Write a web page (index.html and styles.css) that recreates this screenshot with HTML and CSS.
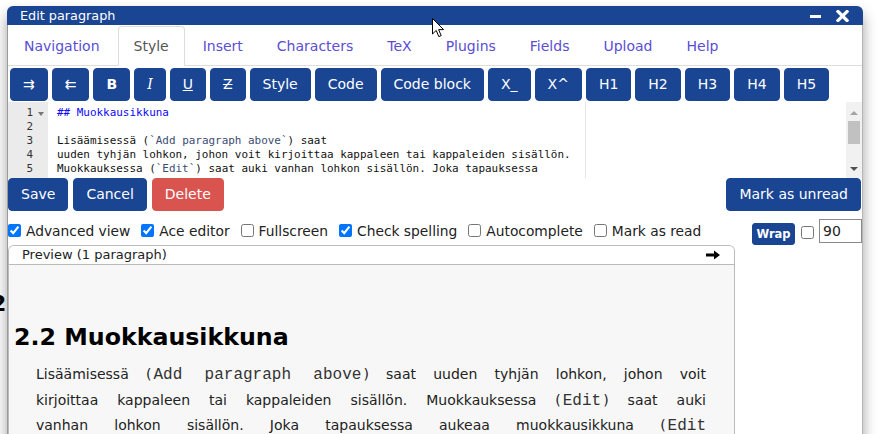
FILE: index.html
```html
<!DOCTYPE html>
<html lang="fi">
<head>
<meta charset="utf-8">
<title>Edit paragraph</title>
<link rel="stylesheet" href="styles.css">
</head>
<body>
<div class="backdrop"><div class="bg-heading">2</div></div>

<div class="dialog">
  <div class="titlebar">
    <span class="title">Edit paragraph</span>
    <div class="win-ctrls">
      <svg class="ico-min" width="11" height="3" viewBox="0 0 11 3"><rect width="11" height="3" fill="#fff"/></svg>
      <svg class="ico-close" width="13" height="12" viewBox="0 0 13 12"><path d="M2 1.5 L11 10.5 M11 1.5 L2 10.5" stroke="#fff" stroke-width="3.2" stroke-linecap="square"/></svg>
    </div>
  </div>
  <div class="dbody">
    <ul class="tabs">
      <li><a>Navigation</a></li>
      <li class="active"><a>Style</a></li>
      <li><a>Insert</a></li>
      <li><a>Characters</a></li>
      <li><a>TeX</a></li>
      <li><a>Plugins</a></li>
      <li><a>Fields</a></li>
      <li><a>Upload</a></li>
      <li><a>Help</a></li>
    </ul>
    <div class="toolbar">
      <button class="btn">⇉</button>
      <button class="btn">⇇</button>
      <button class="btn"><b>B</b></button>
      <button class="btn"><i>I</i></button>
      <button class="btn"><u>U</u></button>
      <button class="btn"><s>Z</s></button>
      <button class="btn">Style</button>
      <button class="btn">Code</button>
      <button class="btn">Code block</button>
      <button class="btn">X_</button>
      <button class="btn">X^</button>
      <button class="btn">H1</button>
      <button class="btn">H2</button>
      <button class="btn">H3</button>
      <button class="btn">H4</button>
      <button class="btn">H5</button>
    </div>
    <div class="editor">
      <div class="gutter">
        <div class="gl">1<span class="fold"></span></div>
        <div class="gl">2</div>
        <div class="gl">3</div>
        <div class="gl">4</div>
        <div class="gl">5</div>
      </div>
      <div class="code">
        <div class="cl"><span class="hd">## Muokkausikkuna</span></div>
        <div class="cl"> </div>
        <div class="cl">Lisäämisessä (<span class="cd">`Add paragraph above`</span>) saat</div>
        <div class="cl">uuden tyhjän lohkon, johon voit kirjoittaa kappaleen tai kappaleiden sisällön.</div>
        <div class="cl">Muokkauksessa (<span class="cd">`Edit`</span>) saat auki vanhan lohkon sisällön. Joka tapauksessa</div>
        <div class="print-margin"></div>
      </div>
      <div class="vscroll">
        <span class="arr-up"></span>
        <span class="thumb"></span>
        <span class="arr-down"></span>
      </div>
    </div>
    <div class="actions">
      <div class="act-left">
        <button class="btn">Save</button>
        <button class="btn">Cancel</button>
        <button class="btn btn-red">Delete</button>
      </div>
      <button class="btn">Mark as unread</button>
    </div>
    <div class="lower">
      <div class="left-col">
        <div class="checks">
          <label class="chk"><input type="checkbox" checked>Advanced view</label>
          <label class="chk"><input type="checkbox" checked>Ace editor</label>
          <label class="chk"><input type="checkbox">Fullscreen</label>
          <label class="chk"><input type="checkbox" checked>Check spelling</label>
          <label class="chk"><input type="checkbox">Autocomplete</label>
          <label class="chk"><input type="checkbox">Mark as read</label>
        </div>
        <div class="preview">
          <div class="pv-head">
            <span>Preview (1 paragraph)</span>
            <svg width="14" height="10" viewBox="0 0 14 10"><path d="M0 3.6 H8 V0.5 L14 5 L8 9.5 V6.4 H0 Z" fill="#000"/></svg>
          </div>
          <div class="pv-body">
            <h2 class="pv-h">2.2 Muokkausikkuna</h2>
            <p class="pv-p">Lisäämisessä (<code>Add paragraph above</code>) saat uuden tyhjän lohkon, johon voit<br>kirjoittaa kappaleen tai kappaleiden sisällön. Muokkauksessa (<code>Edit</code>) saat auki<br>vanhan lohkon sisällön. Joka tapauksessa aukeaa muokkausikkuna (<code>Edit<br>paragraph</code>), jossa kappaletta voi muokata.</p>
          </div>
        </div>
      </div>
      <div class="right-col">
        <button class="btn btn-wrap">Wrap</button>
        <input class="wrap-cb" type="checkbox">
        <input class="wrap-num" type="text" value="90">
      </div>
    </div>
  </div>
</div>

<svg class="cursor" width="13" height="20" viewBox="0 0 13 20"><path d="M0.5 0.5 V16 L4.2 12.4 L6.8 18.6 L9.2 17.6 L6.6 11.6 H11.6 Z" fill="#fff" stroke="#000" stroke-width="1"/></svg>
</body>
</html>
```

FILE: styles.css
```css
html, body {
  margin: 0;
  padding: 0;
  background: #fff;
  width: 878px;
  height: 434px;
  overflow: hidden;
  font-family: "DejaVu Sans", Verdana, sans-serif;
}

.backdrop {
  position: absolute;
  left: 0;
  top: 0;
  width: 878px;
  height: 434px;
}
.bg-heading {
  position: absolute;
  left: -9px;
  top: 291px;
  font-weight: bold;
  font-size: 22px;
  white-space: nowrap;
  color: #000;
}

.dialog {
  position: absolute;
  left: 7px;
  top: 6px;
  width: 856px;
  height: 440px;
  background: #fff;
  border-radius: 6px 6px 0 0;
  box-shadow: 0 8px 14px rgba(0, 0, 0, 0.38);
}

.titlebar {
  height: 19px;
  background: #1a4593;
  border-radius: 6px 6px 0 0;
  display: flex;
  align-items: center;
  justify-content: space-between;
  padding: 0 14px 0 13px;
  color: #fff;
}
.title {
  font-size: 12.8px;
  line-height: 19px;
}
.win-ctrls {
  display: flex;
  align-items: center;
  gap: 15px;
}
.ico-min { margin-top: 2px; }

.dbody {
  border-left: 1px solid #9a9a9a;
  border-right: 1px solid #b5b5b5;
  height: 430px;
}

.tabs {
  list-style: none;
  margin: 0;
  padding: 1px 0 0 0;
  display: flex;
  border-bottom: 1px solid #ddd;
}
.tabs li {
  margin-bottom: -1px;
  margin-right: 2px;
}
.tabs a {
  display: block;
  padding: 9px 15px;
  line-height: 20px;
  font-size: 14px;
  color: #5a4ed3;
  border: 1px solid transparent;
  border-radius: 4px 4px 0 0;
}
.tabs .active a {
  color: #555;
  background: #fff;
  border-color: #ddd #ddd transparent;
}

.btn {
  font-family: "DejaVu Sans", Verdana, sans-serif;
  font-size: 14px;
  height: 33px;
  padding: 0 12px;
  border: 1px solid #1a4593;
  background: #1a4593;
  color: #fff;
  border-radius: 4px;
  line-height: 31px;
  cursor: pointer;
}
.btn i { font-family: "DejaVu Serif", serif; }
.btn-red {
  background: #d9534f;
  border-color: #d9534f;
}

.toolbar {
  display: flex;
  gap: 4px;
  padding: 2px 0 1px 2px;
}

.editor {
  display: flex;
  height: 76px;
  overflow: hidden;
  background: #fff;
}
.gutter {
  width: 40px;
  flex-shrink: 0;
  background: #ebebeb;
  padding-top: 4px;
  font-family: "DejaVu Sans Mono", monospace;
  font-size: 10.95px;
  color: #333;
}
.gl {
  height: 14px;
  line-height: 14px;
  text-align: right;
  padding-right: 15px;
  position: relative;
}
.fold {
  position: absolute;
  right: 4px;
  top: 6px;
  width: 0;
  height: 0;
  border-left: 3px solid transparent;
  border-right: 3px solid transparent;
  border-top: 4px solid #777;
}
.code {
  flex: 1;
  position: relative;
  padding: 4px 0 0 9px;
  font-family: "DejaVu Sans Mono", monospace;
  font-size: 10.95px;
  color: #111;
}
.cl {
  height: 14px;
  line-height: 14px;
  white-space: pre;
}
.hd { color: #0c07ff; }
.cd { color: #3c4c72; }
.print-margin {
  position: absolute;
  left: 537px;
  top: 0;
  bottom: 0;
  width: 1px;
  background: #e6e6e6;
}
.vscroll {
  width: 16px;
  flex-shrink: 0;
  background: #f1f1f1;
  position: relative;
}
.thumb {
  position: absolute;
  left: 2px;
  top: 19px;
  width: 12px;
  height: 23px;
  background: #c1c1c1;
}
.arr-up, .arr-down {
  position: absolute;
  left: 4px;
  width: 0;
  height: 0;
  border-left: 4px solid transparent;
  border-right: 4px solid transparent;
}
.arr-up { top: 9px; border-bottom: 4px solid #a3a3a3; }
.arr-down { bottom: 7px; border-top: 4px solid #505050; }

.actions {
  display: flex;
  justify-content: space-between;
  padding-right: 1px;
}
.act-left {
  display: flex;
  gap: 5px;
}

.lower {
  display: flex;
}
.left-col {
  width: 727px;
  flex-shrink: 0;
}
.checks {
  height: 34px;
  display: flex;
  align-items: center;
  gap: 11px;
  padding-top: 5px;
  box-sizing: border-box;
}
.chk {
  display: flex;
  align-items: center;
  font-size: 13.8px;
  color: #222;
}
.chk input {
  margin: 0 5px 0 0;
  width: 13px;
  height: 13px;
}

.preview {
  border: 1px solid #bbb;
  border-bottom: 0;
  border-radius: 6px 6px 0 0;
  height: 200px;
  overflow: hidden;
}
.pv-head {
  height: 18px;
  line-height: 18px;
  font-size: 13px;
  color: #222;
  padding: 0 14px 0 13px;
  display: flex;
  align-items: center;
  justify-content: space-between;
  border-bottom: 1px solid #bbb;
  background: #fff;
}
.pv-body {
  background: #f7f7f7;
  height: 180px;
  padding: 1px 5px 0 5px;
}
.pv-h {
  margin: 57px 0 0 0;
  font-size: 23.7px;
  line-height: 28px;
  font-weight: bold;
  color: #000;
}
.pv-p {
  margin: 11px 23px 0 22px;
  font-size: 14px;
  line-height: 25.7px;
  color: #222;
  text-align: justify;
  text-align-last: justify;
}
.pv-p code {
  font-family: "Liberation Mono", "Courier New", monospace;
  font-size: 16px;
  line-height: 1;
  padding: 0 2px;
  color: #333;
}

.right-col {
  flex: 1;
  min-width: 0;
  display: flex;
  align-items: flex-start;
  padding-left: 17px;
}
.btn-wrap {
  width: 43px;
  height: 22px;
  line-height: 20px;
  padding: 0;
  font-size: 11.5px;
  font-weight: bold;
  border-radius: 3px;
  margin-top: 12px;
  flex-shrink: 0;
}
.wrap-cb {
  margin: 15px 5px 0 6px;
  width: 13px;
  height: 13px;
  flex-shrink: 0;
}
.wrap-num {
  margin-top: 8px;
  width: 43px;
  height: 24px;
  flex-shrink: 0;
  box-sizing: border-box;
  border: 1px solid #8a8a8a;
  padding: 0 3px;
  font-family: "DejaVu Sans", Verdana, sans-serif;
  font-size: 14px;
  color: #222;
}

.cursor {
  position: absolute;
  left: 432px;
  top: 18px;
}
```
